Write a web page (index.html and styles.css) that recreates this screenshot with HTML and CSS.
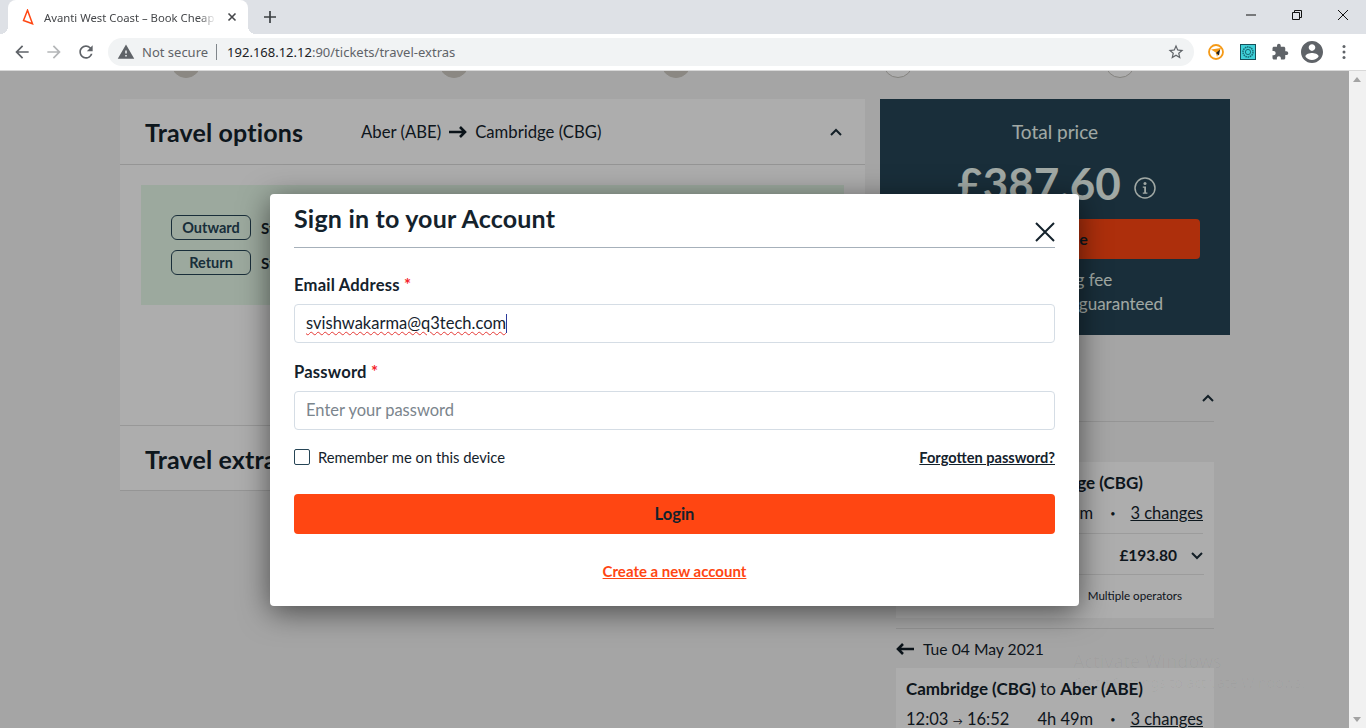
FILE: index.html
```html
<!DOCTYPE html>
<html lang="en">
<head>
    <meta charset="UTF-8">
    <meta name="viewport" content="width=device-width, initial-scale=1.0">
    <title>Avanti West Coast – Book Cheap Train Tickets</title>
    <link rel="stylesheet" href="styles.css">
</head>
<body>
    <div class="tabbar">
        <div class="tab">
            <svg class="favicon" viewBox="0 0 12 16" width="12" height="16"><path d="M5.5 1.2 1.5 11.5 10.5 14.8Z" fill="none" stroke="#ff4612" stroke-width="1.5"/></svg>
            <span class="tab-title">Avanti West Coast – Book Cheap Train Tickets</span>
            <svg class="tab-close" viewBox="0 0 10 10" width="10" height="10"><path d="M1.5 1.5l7 7M8.5 1.5l-7 7" stroke="#45474a" stroke-width="1.6" fill="none"/></svg>
        </div>
        <svg class="new-tab" viewBox="0 0 12 12" width="12" height="12"><path d="M6 0v12M0 6h12" stroke="#3c4043" stroke-width="1.7" fill="none"/></svg>
        <div class="window-btns">
            <span class="window-btn"><svg viewBox="0 0 10 10" width="10" height="10"><path d="M0 5h10" stroke="#111" fill="none"/></svg></span>
            <span class="window-btn"><svg viewBox="0 0 10 10" width="10" height="10"><path d="M.5 2.5h7v7h-7zM2.5 2.5v-2h7v7h-2" stroke="#111" fill="none"/></svg></span>
            <span class="window-btn"><svg viewBox="0 0 10 10" width="10" height="10"><path d="M0 0l10 10M10 0L0 10" stroke="#111" fill="none"/></svg></span>
        </div>
    </div>

    <div class="toolbar">
        <span class="tool-btn"><svg viewBox="0 0 24 24" width="20" height="20"><path fill="#5f6368" d="M20 11H7.83l5.59-5.59L12 4l-8 8 8 8 1.41-1.41L7.83 13H20v-2z"/></svg></span>
        <span class="tool-btn"><svg viewBox="0 0 24 24" width="20" height="20"><path fill="#b4b6b8" d="M4 11h12.17l-5.59-5.59L12 4l8 8-8 8-1.41-1.41L16.17 13H4v-2z"/></svg></span>
        <span class="tool-btn"><svg viewBox="0 0 24 24" width="20" height="20"><path fill="#5f6368" d="M17.65 6.35A7.958 7.958 0 0012 4c-4.42 0-7.99 3.58-7.99 8s3.57 8 7.99 8c3.73 0 6.84-2.55 7.73-6h-2.08A5.99 5.99 0 0112 18c-3.31 0-6-2.69-6-6s2.69-6 6-6c1.66 0 3.14.69 4.22 1.78L13 11h7V4l-2.35 2.35z"/></svg></span>
        <div class="omnibox">
            <svg class="warn" viewBox="0 0 24 24" width="18" height="18"><path fill="#5f6368" d="M1 21h22L12 2 1 21zm12-3h-2v-2h2v2zm0-4h-2v-4h2v4z"/></svg>
            <span class="not-secure">Not secure</span>
            <span class="url"><span class="host">192.168.12.12</span>:90/tickets/travel-extras</span>
            <svg class="star" viewBox="0 0 24 24" width="18" height="18"><path fill="#5f6368" d="M22 9.24l-7.19-.62L12 2 9.19 8.63 2 9.24l5.46 4.73L5.82 21 12 17.27 18.18 21l-1.63-7.03L22 9.24zM12 15.4l-3.76 2.27 1-4.28-3.32-2.88 4.38-.38L12 6.1l1.71 4.04 4.38.38-3.32 2.88 1 4.28L12 15.4z"/></svg>
        </div>
        <div class="ext-btns">
            <span class="tool-btn"><svg viewBox="0 0 16 16" width="16" height="16"><circle cx="8" cy="8" r="7" fill="#fff" stroke="#f59a17" stroke-width="1.8"/><path d="M3 5.5 13 4 9 13 7.8 8.6Z" fill="#f59a17"/><path d="M4.5 12 12 5.5 11 11.5 8 9Z" fill="#202124"/></svg></span>
            <span class="tool-btn"><svg viewBox="0 0 16 16" width="16" height="16"><rect x=".5" y=".5" width="15" height="15" fill="#3fd0d8" stroke="#16505a"/><circle cx="8" cy="8" r="5" fill="none" stroke="#176a74" stroke-width="1.5" stroke-dasharray="1.5 .7"/><circle cx="8" cy="8" r="2.6" fill="none" stroke="#176a74"/></svg></span>
            <span class="tool-btn"><svg viewBox="0 0 24 24" width="18" height="18"><path fill="#5f6368" d="M20.5 11H19V7c0-1.1-.9-2-2-2h-4V3.5C13 2.12 11.88 1 10.5 1S8 2.12 8 3.5V5H4c-1.1 0-1.99.9-1.99 2v3.8H3.5c1.49 0 2.7 1.21 2.7 2.7s-1.21 2.7-2.7 2.7H2V20c0 1.1.9 2 2 2h3.8v-1.5c0-1.49 1.21-2.7 2.7-2.7 1.49 0 2.7 1.21 2.7 2.7V22H17c1.1 0 2-.9 2-2v-4h1.5c1.38 0 2.5-1.12 2.5-2.5S21.88 11 20.5 11z"/></svg></span>
            <span class="tool-btn"><svg viewBox="2 2 20 20" width="22" height="22"><path fill="#5f6368" d="M12 2C6.48 2 2 6.48 2 12s4.48 10 10 10 10-4.48 10-10S17.52 2 12 2zm0 3c1.66 0 3 1.34 3 3s-1.34 3-3 3-3-1.34-3-3 1.34-3 3-3zm0 14.2c-2.5 0-4.71-1.28-6-3.22.03-1.99 4-3.08 6-3.08 1.99 0 5.97 1.09 6 3.08-1.29 1.94-3.5 3.22-6 3.22z"/></svg></span>
            <span class="tool-btn"><svg viewBox="0 0 4 16" width="4" height="16"><g fill="#5f6368"><circle cx="2" cy="2.5" r="1.5"/><circle cx="2" cy="8" r="1.5"/><circle cx="2" cy="13.5" r="1.5"/></g></svg></span>
        </div>
    </div>

    <div class="viewport">
        <div class="page">
            <div class="steps">
                <span class="step done"></span>
                <span class="step done second"></span>
                <span class="step done"></span>
                <span class="step"></span>
                <span class="step"></span>
            </div>

            <div class="columns">
                <div class="left-col">
                    <section class="options-card">
                        <div class="card-head">
                            <h2>Travel options</h2>
                            <div class="route">
                                <span>Aber (ABE)</span>
                                <svg viewBox="0 0 18 12" width="18" height="12"><path d="M0 6h16M11 1l5 5-5 5" stroke="#111d26" stroke-width="2.6" fill="none"/></svg>
                                <span>Cambridge (CBG)</span>
                            </div>
                            <svg class="chevron" viewBox="0 0 12 8" width="12" height="8"><path d="M1 7l5-5 5 5" stroke="#1d2f3a" stroke-width="2" fill="none"/></svg>
                        </div>
                        <div class="ticket-box">
                            <div class="ticket-row"><span class="ticket-tag">Outward</span><b>Standard</b></div>
                            <div class="ticket-row"><span class="ticket-tag">Return</span><b>Standard</b></div>
                        </div>
                    </section>
                    <section class="extras-card">
                        <h2>Travel extras</h2>
                    </section>
                </div>

                <div class="right-col">
                    <div class="price-panel">
                        <div class="price-label">Total price</div>
                        <div class="price-row">
                            <span class="price">£387.60</span>
                            <svg class="info" viewBox="0 0 22 22" width="22" height="22"><circle cx="11" cy="11" r="10" fill="none" stroke="#eef9f3" stroke-width="1.5"/><circle cx="11" cy="6.6" r="1.5" fill="#eef9f3"/><path d="M8.8 9.5h3.2v6h1.4v1.3H8.8v-1.3h1.4v-4.7H8.8z" fill="#eef9f3"/></svg>
                        </div>
                        <div class="continue-btn">Continue</div>
                        <div class="price-note">No booking fee</div>
                        <div class="price-note">Cheapest tickets, guaranteed</div>
                    </div>

                    <div class="summary">
                        <div class="summary-head">
                            <svg class="chevron" viewBox="0 0 12 8" width="12" height="8"><path d="M1 7l5-5 5 5" stroke="#1d2f3a" stroke-width="2" fill="none"/></svg>
                        </div>
                        <div class="journey-card">
                            <div class="journey-title"><b>Aber (ABE)</b> to <b>Cambridge (CBG)</b></div>
                            <div class="journey-times">
                                <span>4h 49m</span>
                                <span class="dot">•</span>
                                <a href="#">3 changes</a>
                            </div>
                            <div class="journey-fare">
                                <b>£193.80</b>
                                <svg viewBox="0 0 12 8" width="12" height="8"><path d="M1 1l5 5 5-5" stroke="#1d2f3a" stroke-width="2" fill="none"/></svg>
                            </div>
                            <div class="journey-operator">Multiple operators</div>
                        </div>
                        <div class="return-date">
                            <svg viewBox="0 0 18 12" width="18" height="12"><path d="M18 6H2M7 1 2 6l5 5" stroke="#111d26" stroke-width="2.6" fill="none"/></svg>
                            <span>Tue 04 May 2021</span>
                        </div>
                        <div class="journey-card">
                            <div class="journey-title"><b>Cambridge (CBG)</b> to <b>Aber (ABE)</b></div>
                            <div class="journey-times">
                                <span class="clock">12:03 <span class="clock-arrow">→</span> 16:52</span>
                                <span>4h 49m</span>
                                <span class="dot">•</span>
                                <a href="#">3 changes</a>
                            </div>
                        </div>
                    </div>
                </div>
            </div>

            <div class="watermark">
                <div class="watermark-title">Activate Windows</div>
                <div>Go to Settings to activate Windows.</div>
            </div>

            <div class="overlay">
                <div class="modal">
                    <div class="modal-head">
                        <h1>Sign in to your Account</h1>
                        <svg class="modal-close" viewBox="0 0 20 20" width="20" height="20"><path d="M1 1l18 18M19 1 1 19" stroke="#14222c" stroke-width="2" fill="none"/></svg>
                    </div>
                    <label class="field-label">Email Address <span class="req">*</span></label>
                    <div class="field focused"><span class="typed">svishwakarma@q3tech.com</span><span class="caret"></span></div>
                    <label class="field-label">Password <span class="req">*</span></label>
                    <input class="field" type="password" placeholder="Enter your password">
                    <div class="remember-row">
                        <label class="remember"><span class="checkbox"></span>Remember me on this device</label>
                        <a class="forgot" href="#">Forgotten password?</a>
                    </div>
                    <button class="login-btn">Login</button>
                    <a class="create-link" href="#">Create a new account</a>
                </div>
            </div>
        </div>

        <div class="scrollbar">
            <span class="arrow-up"></span>
            <span class="arrow-down"></span>
        </div>
    </div>
</body>
</html>
```

FILE: styles.css
```css
* {
    box-sizing: border-box;
}
html, body {
    margin: 0;
    height: 100%;
    overflow: hidden;
}
body {
    font-family: 'Lato', sans-serif;
    color: #14222c;
    background: #fff;
    display: flex;
    flex-direction: column;
}
h1, h2 {
    margin: 0;
    font-weight: 700;
}

/* browser chrome */
.tabbar {
    height: 34px;
    flex: none;
    background: #dee1e6;
    display: flex;
    align-items: center;
    padding-left: 8px;
}
.tab {
    position: relative;
    width: 240px;
    height: 34px;
    background: #fff;
    border-radius: 8px 8px 0 0;
    display: flex;
    align-items: center;
    padding-left: 14px;
}
.tab::before,
.tab::after {
    content: "";
    position: absolute;
    bottom: 0;
    width: 8px;
    height: 8px;
}
.tab::before {
    left: -8px;
    background: radial-gradient(circle at 0 0, transparent 8px, #fff 8px);
}
.tab::after {
    right: -8px;
    background: radial-gradient(circle at 100% 0, transparent 8px, #fff 8px);
}
.favicon {
    flex: none;
}
.tab-title {
    width: 172px;
    margin-left: 10px;
    font-family: 'Noto Sans', sans-serif;
    font-size: 11.3px;
    color: #45474a;
    white-space: nowrap;
    overflow: hidden;
    -webkit-mask-image: linear-gradient(to right, #000 90%, transparent);
    mask-image: linear-gradient(to right, #000 90%, transparent);
}
.tab-close {
    margin-left: 11px;
}
.new-tab {
    margin-left: 16px;
}
.window-btns {
    margin-left: auto;
    display: flex;
    align-self: flex-start;
}
.window-btn {
    width: 46px;
    height: 29px;
    display: flex;
    align-items: center;
    justify-content: center;
}
.toolbar {
    height: 37px;
    flex: none;
    background: #fff;
    border-bottom: 1px solid #d8d8d8;
    display: flex;
    align-items: center;
    padding: 0 6px;
}
.tool-btn {
    width: 32px;
    height: 32px;
    display: flex;
    align-items: center;
    justify-content: center;
}
.omnibox {
    width: 1086px;
    height: 28px;
    margin-left: 6px;
    background: #f1f3f4;
    border-radius: 14px;
    display: flex;
    align-items: center;
    padding-left: 9px;
    font-family: 'Noto Sans', sans-serif;
    font-size: 13px;
    white-space: nowrap;
}
.not-secure {
    margin-left: 7px;
    padding-right: 8px;
    border-right: 1px solid #80868b;
    line-height: 16px;
    color: #5f6368;
}
.url {
    margin-left: 10px;
    color: #5f6368;
}
.host {
    color: #202124;
}
.star {
    margin-left: auto;
    margin-right: 9px;
}
.ext-btns {
    display: flex;
    margin-left: 6px;
}

/* page under the dialog */
.viewport {
    flex: 1;
    display: flex;
    min-height: 0;
}
.page {
    position: relative;
    width: 1349px;
    overflow: hidden;
    background: #f4f4f4;
}
.steps {
    height: 28px;
    display: flex;
    gap: 192px;
    padding-left: 171px;
}
.step {
    flex: none;
    width: 30px;
    height: 30px;
    margin-top: -23px;
    border-radius: 50%;
    background: #fff;
    border: 1px solid #c4c2bd;
}
.step.done {
    background: #cdc9c1;
    border-color: #cdc9c1;
}
.step.second {
    margin-left: 46px;
}
.columns {
    display: flex;
    gap: 15px;
    padding-left: 120px;
}
.left-col {
    width: 745px;
}
.right-col {
    width: 350px;
}
.options-card,
.extras-card {
    background: #fff;
}
.options-card {
    height: 327px;
    border-bottom: 1px solid #e1e1e1;
}
.card-head {
    height: 66px;
    display: flex;
    align-items: center;
    padding: 0 23px 0 25px;
    border-bottom: 1px solid #dcdcdc;
}
.card-head h2,
.extras-card h2 {
    font-size: 25px;
    letter-spacing: 0.15px;
}
.route {
    margin-left: 58px;
    display: flex;
    align-items: center;
    gap: 8px;
    font-size: 16.7px;
}
.chevron {
    margin-left: auto;
}
.ticket-box {
    margin: 20px 21px 0;
    height: 120px;
    background: #e6f9e9;
    padding: 30px 30px 0;
}
.ticket-row {
    display: flex;
    align-items: center;
    gap: 10px;
    margin-bottom: 10px;
    font-size: 15px;
}
.ticket-tag {
    width: 80px;
    height: 25px;
    border: 1px solid #264556;
    border-radius: 6px;
    font-size: 14.5px;
    font-weight: 700;
    color: #264556;
    display: flex;
    align-items: center;
    justify-content: center;
}
.extras-card {
    height: 65px;
    padding: 1px 25px 0;
    display: flex;
    align-items: center;
    border-bottom: 1px solid #dcdcdc;
}

.price-panel {
    height: 236px;
    background: #264556;
    color: #eef9f3;
    text-align: center;
    padding: 21px 30px 0;
}
.price-label {
    font-size: 19px;
    line-height: 24px;
}
.price-row {
    height: 56px;
    margin-top: 11px;
    display: flex;
    align-items: center;
    justify-content: center;
    gap: 13px;
    padding-left: 3px;
}
.price {
    font-size: 44px;
    font-weight: 700;
}
.info {
    margin-top: 10px;
}
.continue-btn {
    height: 40px;
    margin-top: 8px;
    border-radius: 4px;
    background: #ff4612;
    color: #14222c;
    font-size: 16px;
    font-weight: 700;
    line-height: 40px;
}
.price-note {
    font-size: 17px;
    line-height: 24px;
}
.continue-btn + .price-note {
    margin-top: 9px;
}
.summary {
    padding: 0 16px;
}
.summary-head {
    height: 87px;
    display: flex;
    align-items: center;
    padding: 39px 0 0;
    border-bottom: 1px solid #dcdcdc;
}
.journey-card {
    margin-top: 40px;
    background: #fff;
    padding: 11px 10px 0;
    height: 156px;
}
.journey-title {
    font-size: 17px;
    line-height: 20px;
}
.journey-times {
    display: flex;
    align-items: center;
    justify-content: flex-end;
    height: 41px;
    font-size: 16.5px;
    border-bottom: 1px solid #e6e6e6;
    margin-right: 1px;
}
.journey-times a,
.forgot,
.create-link {
    color: inherit;
}
.journey-times .dot {
    margin: 0 15px 0 17px;
    font-size: 9px;
}
.clock {
    margin-right: auto;
}
.clock-arrow {
    font-size: 10px;
}
.journey-fare {
    height: 41px;
    display: flex;
    align-items: center;
    justify-content: flex-end;
    gap: 14px;
    padding: 2px 1px 0 0;
    font-size: 15.5px;
    border-bottom: 1px solid #e6e6e6;
}
.journey-fare svg {
    margin-top: 1px;
}
.journey-operator {
    height: 42px;
    line-height: 41px;
    font-size: 11.6px;
    text-align: right;
    padding-right: 22px;
}
.return-date {
    margin-top: 10px;
    height: 30px;
    border-top: 1px solid #dcdcdc;
    display: flex;
    align-items: flex-end;
    gap: 9px;
    font-size: 15.7px;
}
.return-date + .journey-card {
    margin-top: 10px;
}
.return-date svg {
    margin-bottom: 3px;
}
.watermark {
    position: absolute;
    left: 1073px;
    top: 578px;
    font-family: 'Noto Sans', sans-serif;
    font-size: 14px;
    color: rgba(0, 0, 0, 0.03);
    white-space: nowrap;
}
.watermark-title {
    font-size: 18px;
}

/* dialog */
.overlay {
    position: absolute;
    inset: 0;
    background: rgba(0, 0, 0, 0.32);
    display: flex;
    justify-content: center;
    padding-top: 123px;
}
.modal {
    width: 809px;
    height: 412px;
    background: #fff;
    border-radius: 4px;
    padding: 0 24px;
    display: flex;
    flex-direction: column;
    box-shadow: 0 6px 30px rgba(0, 0, 0, 0.55);
}
.modal-head {
    position: relative;
    height: 54px;
    border-bottom: 1px solid #a6b0ba;
    margin-bottom: 23px;
}
.modal-head h1 {
    font-size: 25px;
    letter-spacing: 0.2px;
    line-height: 48px;
}
.modal-close {
    position: absolute;
    right: 0;
    top: 28px;
}
.field-label {
    font-size: 16.6px;
    letter-spacing: 0.2px;
    font-weight: 700;
    line-height: 26px;
    padding-top: 1px;
    height: 27px;
    margin-bottom: 6px;
}
.req {
    color: #f5222d;
}
.field {
    width: 100%;
    height: 39px;
    flex: none;
    border: 1px solid #d5dde5;
    border-radius: 4px;
    padding: 0 11px 1px;
    background: #fff;
    font-family: inherit;
    font-size: 16.5px;
    color: #14222c;
    display: flex;
    align-items: center;
    margin-bottom: 15px;
}
.field::placeholder {
    color: #7b858d;
    opacity: 1;
}
.typed {
    text-decoration: underline wavy #e53935 1px;
    text-underline-offset: 2px;
}
.caret {
    width: 1px;
    height: 19px;
    background: #2b3a9b;
}
.remember-row {
    display: flex;
    align-items: center;
    justify-content: space-between;
    height: 24px;
}
.remember {
    display: flex;
    align-items: center;
    gap: 8px;
    font-size: 14.8px;
}
.checkbox {
    width: 16px;
    height: 16px;
    border: 1px solid #264556;
    border-radius: 2px;
}
.forgot {
    font-size: 14.6px;
    font-weight: 700;
}
.login-btn {
    height: 40px;
    flex: none;
    margin-top: 25px;
    border: none;
    border-radius: 4px;
    background: #ff4612;
    color: #14222c;
    font-family: inherit;
    font-size: 16.5px;
    font-weight: 700;
}
.create-link {
    margin-top: 28px;
    text-align: center;
    font-size: 15px;
    font-weight: 700;
    color: #ff4612;
}

.scrollbar {
    position: relative;
    width: 17px;
    background: #f1f1f1;
}
.arrow-up,
.arrow-down {
    position: absolute;
    left: 4px;
    border-left: 4px solid transparent;
    border-right: 4px solid transparent;
}
.arrow-up {
    top: 6px;
    border-bottom: 5px solid #a3a3a3;
}
.arrow-down {
    bottom: 6px;
    border-top: 5px solid #a3a3a3;
}
```
